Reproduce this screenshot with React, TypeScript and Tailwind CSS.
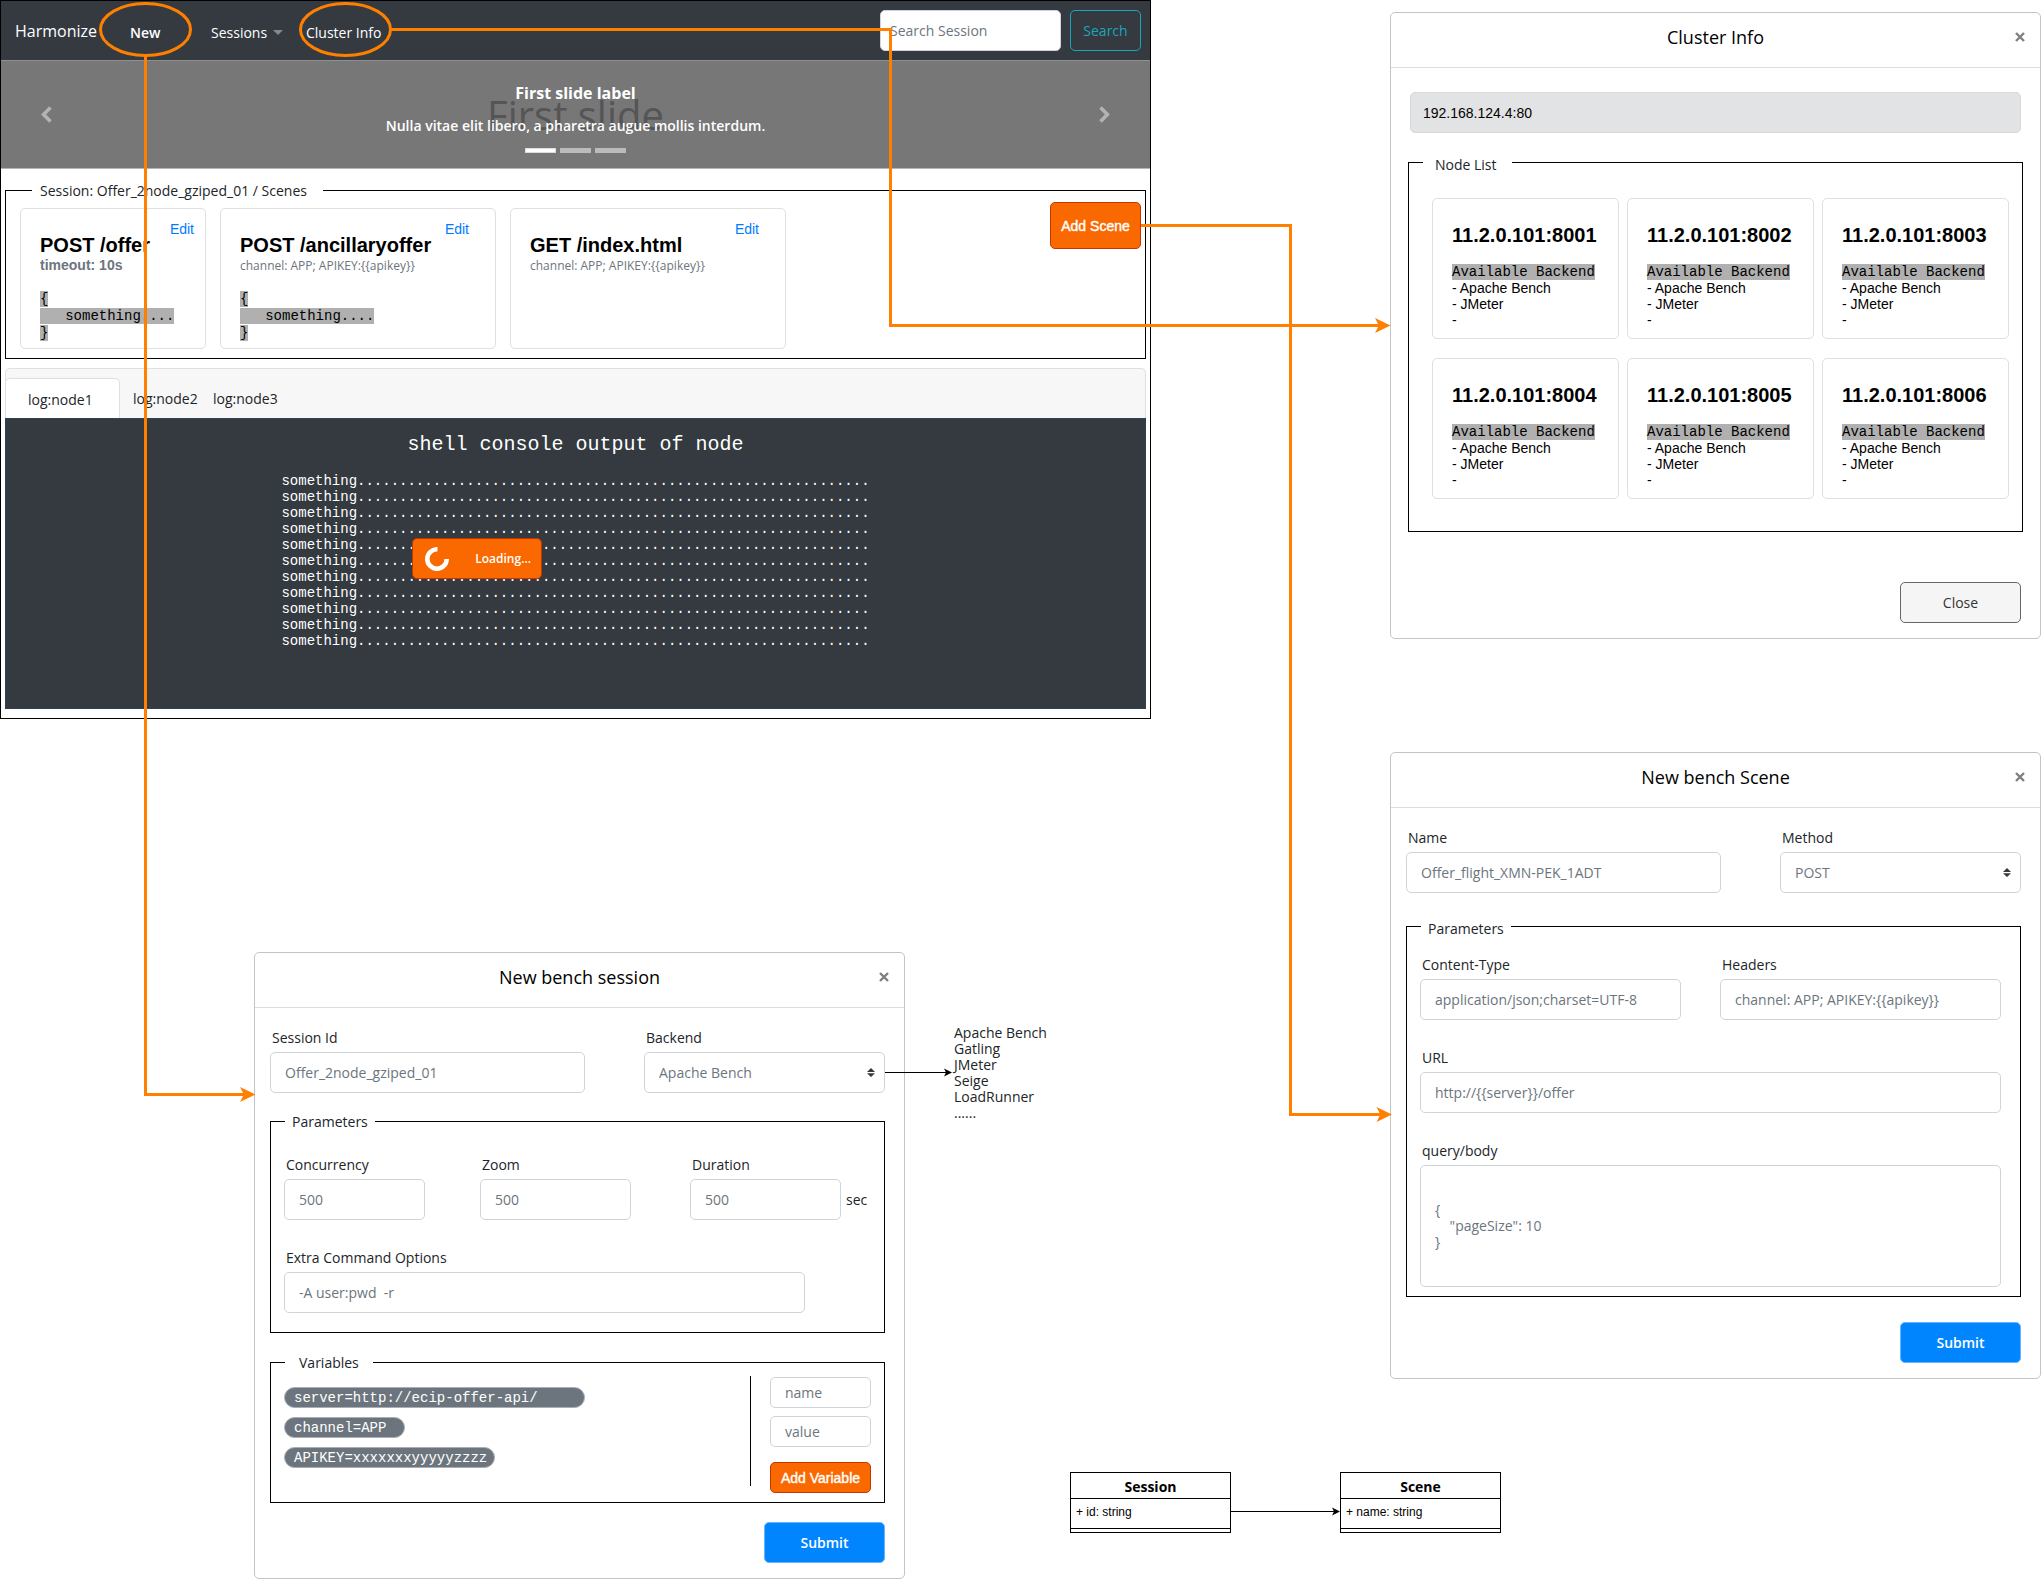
import type { ReactNode } from 'react';

const scenes = [
  { title: 'POST /offer', note: 'timeout: 10s', bold: true, body: true, width: 'w-[186px]', edit: 'mr-[11px]' },
  { title: 'POST /ancillaryoffer', note: 'channel: APP; APIKEY:{{apikey}}', bold: false, body: true, width: 'w-[276px]', edit: 'mr-[26px]' },
  { title: 'GET /index.html', note: 'channel: APP; APIKEY:{{apikey}}', bold: false, body: false, width: 'w-[276px]', edit: 'mr-[26px]' },
];

const nodes = ['8001', '8002', '8003', '8004', '8005', '8006'];
const backends = ['Apache Bench', 'Gatling', 'JMeter', 'Seige', 'LoadRunner', '......'];
const logLine = 'something' + '.'.repeat(61);
const logLines = Array.from({ length: 11 }, () => logLine);

const control = 'h-[41px] w-full rounded-[5px] border border-[#ced4da] bg-white px-3.5 text-sm text-[#6c757d]';

function Field({ id, label, value, className }: { id: string; label: string; value: string; className: string }) {
  return (
    <div className={className}>
      <label htmlFor={id} className="mb-1 block pl-0.5 text-sm text-[#212529]">{label}</label>
      <input id={id} defaultValue={value} className={`block ${control}`} />
    </div>
  );
}

function SelectField({ id, label, options, className }: { id: string; label: string; options: string[]; className: string }) {
  return (
    <div className={className}>
      <label htmlFor={id} className="mb-1 block pl-0.5 text-sm text-[#212529]">{label}</label>
      <div className="relative">
        <select id={id} className={`block appearance-none ${control}`}>
          {options.map((o) => <option key={o}>{o}</option>)}
        </select>
        <svg className="pointer-events-none absolute top-4 right-2.5 h-[9px] w-2" viewBox="0 0 8 9" fill="#343a40">
          <path d="M0 4 4 0l4 4zM0 5.2h8L4 9z" />
        </svg>
      </div>
    </div>
  );
}

function Group({ legend, legendClass, className, children }: { legend: string; legendClass: string; className: string; children: ReactNode }) {
  return (
    <fieldset className={`border border-black ${className}`}>
      <legend className={`text-sm leading-[21px] text-[#212529] ${legendClass}`}>{legend}</legend>
      {children}
    </fieldset>
  );
}

function Dialog({ title, className, children }: { title: string; className: string; children: ReactNode }) {
  return (
    <section aria-label={title} className={`absolute w-[651px] rounded-[5px] border border-[#c4c4c4] bg-white ${className}`}>
      <header className="grid h-[55px] grid-cols-[1fr_auto_1fr] items-center border-b border-[#dddddd] pb-1.5">
        <h2 className="col-start-2 text-lg text-black">{title}</h2>
        <button type="button" aria-label="Close" className="mr-3.5 justify-self-end p-px">
          <svg className="size-2.5" viewBox="0 0 10 10" stroke="#808080" strokeWidth="2.4">
            <path d="m1 1 8 8M9 1 1 9" />
          </svg>
        </button>
      </header>
      {children}
    </section>
  );
}

function Submit({ className }: { className: string }) {
  return (
    <button type="submit" className={`ml-auto block h-[41px] w-[121px] rounded-[5px] border border-[#66b6ff] bg-[#0085ff] text-sm font-semibold text-white ${className}`}>
      Submit
    </button>
  );
}

function MainWindow() {
  return (
    <main className="absolute top-0 left-0 w-[1151px] border border-black bg-white pb-[9px]">
      <nav className="flex h-[59px] items-center bg-[#343a40] pr-[9px] pl-3.5 text-sm text-white">
        <a href="#home" className="w-[115px] text-base font-medium">Harmonize</a>
        <a href="#new" className="w-[81px] pt-1 font-semibold">New</a>
        <a href="#sessions" className="flex w-[95px] items-center gap-1.5 pt-1 font-medium">
          Sessions
          <svg className="h-[5px] w-2.5" viewBox="0 0 10 5" fill="#85888c"><path d="M0 0h10L5 5z" /></svg>
        </a>
        <a href="#cluster" className="pt-1 font-medium">Cluster Info</a>
        <input aria-label="Search Session" placeholder="Search Session" className="ml-auto h-[41px] w-[181px] rounded-[5px] border border-[#ced4da] bg-white px-[9px] placeholder:text-[#6c757d]" />
        <button type="button" className="ml-[9px] h-[41px] w-[71px] rounded-[5px] border border-[#1ca5b8] text-[#1ca5b8]">Search</button>
      </nav>

      <section aria-label="Carousel" className="relative flex h-[109px] items-center justify-between border-t border-b border-t-[#8f8f8f] border-b-[#b5b5b5] bg-[#777777] px-10 text-white">
        <button type="button" aria-label="Previous">
          <svg className="h-[17px] w-[11px]" viewBox="0 0 11 17" fill="none" stroke="#b3b3b3" strokeWidth="3.6"><path d="M9.5 1.5 2.6 8.5l6.9 7" /></svg>
        </button>
        <p className="absolute inset-x-0 top-[27px] text-center text-[40px] leading-[54px] text-[#555555]">First slide</p>
        <div className="relative flex flex-col items-center pt-[5px]">
          <h2 className="text-base font-bold">First slide label</h2>
          <p className="mt-[11px] text-sm font-semibold">Nulla vitae elit libero, a pharetra augue mollis interdum.</p>
          <div className="mt-3 flex gap-1">
            <span className="h-[5px] w-[31px] border border-[#dddddd] bg-white" />
            <span className="h-[5px] w-[31px] bg-[#bbbbbb]" />
            <span className="h-[5px] w-[31px] bg-[#bbbbbb]" />
          </div>
        </div>
        <button type="button" aria-label="Next">
          <svg className="h-[17px] w-[11px]" viewBox="0 0 11 17" fill="none" stroke="#b3b3b3" strokeWidth="3.6"><path d="m1.5 1.5 6.9 7-6.9 7" /></svg>
        </button>
      </section>

      <Group legend="Session: Offer_2node_gziped_01 / Scenes" legendClass="ml-[26px] pr-4 pl-2" className="mx-1 mt-[11px] pb-[9px]">
        <div className="flex items-start justify-between pr-1 pl-3.5 font-['Liberation_Sans',Arial,sans-serif]">
          <div className="mt-[7px] flex gap-3.5">
            {scenes.map((s) => (
              <article key={s.title} className={`h-[141px] rounded-[5px] border border-[#dfdfdf] pt-3 pl-[19px] ${s.width}`}>
                <a href="#edit" className={`block text-right text-sm leading-4 text-[#007bff] ${s.edit}`}>Edit</a>
                <h3 className="text-xl leading-4 font-bold whitespace-nowrap text-black">{s.title}</h3>
                {s.bold ? (
                  <p className="mt-1 text-sm leading-4 font-bold text-[#6c757d]">{s.note}</p>
                ) : (
                  <p className="mt-1 font-['Open_Sans',sans-serif] text-xs leading-[18px] text-[#6c757d]">{s.note}</p>
                )}
                {s.body && (
                  <pre className={`font-['Liberation_Mono',monospace] text-sm leading-[17px] text-black ${s.bold ? 'mt-[18px]' : 'mt-4'}`}>
                    <span className="bg-[#b0b0b0]">{'{'}</span>{'\n'}
                    <span className="bg-[#b0b0b0]">{'   something....'}</span>{'\n'}
                    <span className="bg-[#b0b0b0]">{'}'}</span>
                  </pre>
                )}
              </article>
            ))}
          </div>
          <button type="button" className="mt-px h-[47px] w-[91px] rounded-[5px] border border-[#c73500] bg-[#fa6800] text-sm text-white [-webkit-text-stroke:0.4px_#ffffff]">Add Scene</button>
        </div>
      </Group>

      <section aria-label="Logs" className="mx-1 mt-[9px]">
        <div role="tablist" className="flex h-[50px] items-end rounded-t-[5px] border border-b-0 border-[#dfdfdf] bg-[#f7f7f7] text-sm text-[#212529]">
          <button type="button" role="tab" aria-selected="true" className="-ml-px h-10 w-[115px] rounded-t-[5px] border border-b-0 border-[#dfdfdf] bg-white pt-0.5 pl-[22px] text-left">log:node1</button>
          <button type="button" role="tab" className="ml-[13px] h-10 w-20 pt-0.5 text-left">log:node2</button>
          <button type="button" role="tab" className="h-10 pt-0.5 text-left">log:node3</button>
        </div>
        <div className="relative h-[291px] border border-[#2b4257] bg-[#343a40] pt-3 text-center font-['Liberation_Mono',monospace] text-white">
          <h3 className="text-xl leading-7">shell console output of node</h3>
          <div className="mt-3.5 text-sm leading-4">
            {logLines.map((l, i) => <p key={i}>{l}</p>)}
          </div>
          <div role="status" className="absolute top-[119px] left-[406px] flex h-[41px] w-[130px] items-center justify-between rounded-[5px] border border-[#c73500] bg-[#fa6800] pr-2.5 pl-3 font-['Open_Sans',sans-serif] text-xs font-semibold">
            <svg className="size-6" viewBox="0 0 24 24" fill="none" stroke="#ffffff" strokeWidth="4.6">
              <path d="M12.5 2.3A9.7 9.7 0 1 0 21.7 12" />
            </svg>
            Loading...
          </div>
        </div>
      </section>
    </main>
  );
}

function ClusterDialog() {
  return (
    <Dialog title="Cluster Info" className="top-3 left-[1390px]">
      <div className="px-[17px] pt-6 pb-[15px]">
        <p className="mx-0.5 h-[41px] rounded-[5px] border border-[#d6d8db] bg-[#e2e3e5] pl-3 font-['Liberation_Sans',Arial,sans-serif] text-sm leading-10 text-black">192.168.124.4:80</p>
        <Group legend="Node List" legendClass="ml-3.5 pt-1 pr-[15px] pl-3" className="mt-[17px] pb-8">
          <div className="grid grid-cols-[187px_187px_187px] gap-x-2 gap-y-[19px] pt-[23px] pl-[23px] font-['Liberation_Sans',Arial,sans-serif]">
            {nodes.map((port) => (
              <article key={port} className="h-[141px] rounded-[5px] border border-[#dfdfdf] pt-6 pl-[19px] text-sm leading-4 text-black">
                <h3 className="mb-[17px] text-xl leading-6 font-bold">11.2.0.101:{port}</h3>
                <p className="w-fit bg-[#b0b0b0] font-['Liberation_Mono',monospace]">Available Backend</p>
                <p>- Apache Bench</p>
                <p>- JMeter</p>
                <p>-</p>
              </article>
            ))}
          </div>
        </Group>
        <button type="button" className="mt-[50px] mr-0.5 ml-auto block h-[41px] w-[121px] rounded-[5px] border border-[#666666] bg-[#f5f5f5] text-sm text-[#333333]">Close</button>
      </div>
    </Dialog>
  );
}

function SceneDialog() {
  return (
    <Dialog title="New bench Scene" className="top-[752px] left-[1390px]">
      <form className="pt-5 pr-[19px] pb-[15px] pl-[15px]">
        <div className="flex justify-between">
          <Field id="scene-name" label="Name" value="Offer_flight_XMN-PEK_1ADT" className="w-[315px]" />
          <SelectField id="scene-method" label="Method" options={['POST', 'GET']} className="w-[241px]" />
        </div>
        <Group legend="Parameters" legendClass="ml-px px-[7px] pt-1" className="mt-[21px] pt-4 pr-[19px] pb-[9px] pl-[13px]">
          <div className="flex justify-between">
            <Field id="content-type" label="Content-Type" value="application/json;charset=UTF-8" className="w-[261px]" />
            <Field id="headers" label="Headers" value="channel: APP; APIKEY:{{apikey}}" className="w-[281px]" />
          </div>
          <Field id="url" label="URL" value="http://{{server}}/offer" className="mt-7" />
          <div className="mt-7">
            <label htmlFor="body" className="mb-1 block pl-0.5 text-sm text-[#212529]">query/body</label>
            <textarea id="body" defaultValue={'{\n    "pageSize": 10\n}'} className="block h-[122px] w-full resize-none rounded-[5px] border border-[#ced4da] px-3.5 pt-9 text-sm leading-4 text-[#6c757d]" />
          </div>
        </Group>
        <Submit className="mt-[25px]" />
      </form>
    </Dialog>
  );
}

function Pill({ text, className }: { text: string; className: string }) {
  return (
    <span className={`block h-[21px] rounded-full border border-[#a9afb4] bg-[#6c757d] pl-[9px] font-['Liberation_Mono',monospace] text-sm leading-5 text-white ${className}`}>
      {text}
    </span>
  );
}

function SessionDialog() {
  const small = 'h-[31px] w-full rounded-[5px] border border-[#ced4da] bg-white px-3.5 text-sm placeholder:text-[#6c757d]';
  return (
    <Dialog title="New bench session" className="top-[952px] left-[254px]">
      <form className="pt-5 pr-[19px] pb-[15px] pl-[15px]">
        <div className="flex justify-between">
          <Field id="session-id" label="Session Id" value="Offer_2node_gziped_01" className="w-[315px]" />
          <SelectField id="backend" label="Backend" options={backends.slice(0, 5)} className="w-[241px]" />
        </div>
        <Group legend="Parameters" legendClass="ml-px px-[7px]" className="mt-[18px] pt-[23px] pb-[19px] pl-[13px]">
          <div className="flex items-end">
            <Field id="concurrency" label="Concurrency" value="500" className="w-[141px]" />
            <Field id="zoom" label="Zoom" value="500" className="ml-[55px] w-[151px]" />
            <Field id="duration" label="Duration" value="500" className="ml-[59px] w-[151px]" />
            <span className="ml-[5px] text-sm leading-10 text-[#212529]">sec</span>
          </div>
          <Field id="extra" label="Extra Command Options" value="-A user:pwd  -r" className="mt-7 w-[521px]" />
        </Group>
        <Group legend="Variables" legendClass="ml-px px-3.5" className="mt-[19px] pr-[13px] pb-[9px] pl-[13px]">
          <div className="flex">
            <div className="flex flex-1 flex-col gap-[9px] pt-3.5">
              <Pill text="server=http://ecip-offer-api/" className="w-[301px]" />
              <Pill text="channel=APP" className="w-[121px]" />
              <Pill text="APIKEY=xxxxxxxyyyyyzzzz" className="w-[211px]" />
            </div>
            <div className="mt-[3px] mr-[19px] h-[110px] border-l border-black" />
            <div className="w-[101px] pt-1">
              <input aria-label="Variable name" placeholder="name" className={`${small} mb-2 block`} />
              <input aria-label="Variable value" placeholder="value" className={`${small} mb-[15px] block`} />
              <button type="button" className="block h-[31px] w-full rounded-[5px] border border-[#c73500] bg-[#fa6800] font-['Liberation_Sans',Arial,sans-serif] text-sm text-white [-webkit-text-stroke:0.4px_#ffffff]">Add Variable</button>
            </div>
          </div>
        </Group>
        <Submit className="mt-[19px]" />
      </form>
    </Dialog>
  );
}

function Entity({ name, attribute, className }: { name: string; attribute: string; className: string }) {
  return (
    <div className={`absolute w-[161px] border border-black bg-white pb-[3px] text-black ${className}`}>
      <h3 className="border-b border-black pt-0.5 text-center text-sm leading-[23px] font-bold">{name}</h3>
      <p className="h-[30px] border-b border-black pl-[5px] font-['Liberation_Sans',Arial,sans-serif] text-xs leading-[26px]">{attribute}</p>
    </div>
  );
}

function Connectors() {
  return (
    <svg className="pointer-events-none absolute inset-0 size-full" fill="none">
      <g stroke="#ff8000" strokeWidth="3">
        <ellipse cx="145.5" cy="29.5" rx="45" ry="26" />
        <ellipse cx="345.5" cy="29.5" rx="45" ry="26" />
        <path d="M145.5 55.5V1094.5H246" />
        <path d="M390.5 29.5h500v296h490" />
        <path d="M1141 225.5h149.500v889h92" />
      </g>
      <g fill="#ff8000">
        <path d="m255.500 1094.500-15.500 7.500 3.800-7.500-3.800-7.500z" />
        <path d="m1390.500 325.500-15.500 7.500 3.800-7.500-3.800-7.500z" />
        <path d="m1392 1114.500-15.500 7.500 3.800-7.500-3.800-7.500z" />
      </g>
      <path d="M885 1072.500h62M1231 1511.500h104" stroke="#000000" />
      <g fill="#000000">
        <path d="m952 1072.500-8 4 2-4-2-4z" />
        <path d="m1340 1511.500-8 4 2-4-2-4z" />
      </g>
    </svg>
  );
}

export default function App() {
  return (
    <div className="relative min-h-screen min-w-[2041px] bg-white font-['Open_Sans','Noto_Sans',sans-serif]">
      <MainWindow />
      <ClusterDialog />
      <SceneDialog />
      <SessionDialog />
      <ul className="absolute top-[1025px] left-[954px] text-sm leading-4 text-[#212529]">
        {backends.map((b) => <li key={b}>{b}</li>)}
      </ul>
      <Entity name="Session" attribute="+ id: string" className="top-[1472px] left-[1070px]" />
      <Entity name="Scene" attribute="+ name: string" className="top-[1472px] left-[1340px]" />
      <Connectors />
    </div>
  );
}
